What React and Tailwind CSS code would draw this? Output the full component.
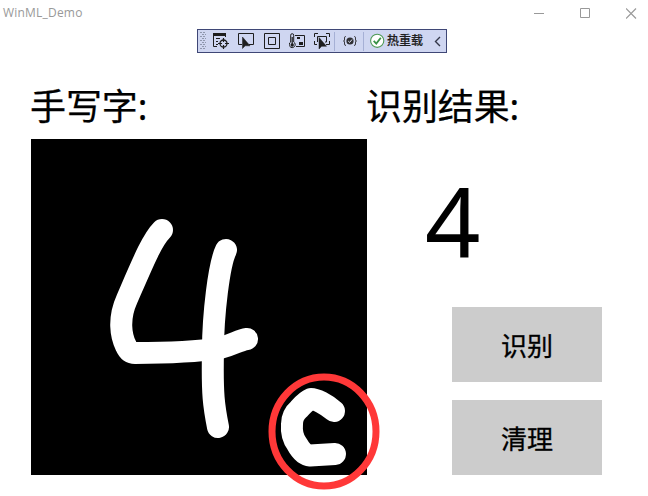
import React from "react";

const Icon = ({ className, children, w = 16 }) => (
  <svg width={w} height="16" viewBox={`0 0 ${w} 16`} className={`shrink-0 ${className}`} fill="none" stroke="#1e1e1e">
    {children}
  </svg>
);

const GRIP = [0, 1, 2, 3, 4, 5, 6, 7, 8];
const CURSOR = "M0 0V11.5L2.7 8.8H7.5Z";

function DebugToolbar() {
  return (
    <div className="ml-[197px] mt-[3px] flex h-6 w-[250px] shrink-0 items-center border border-[#3f4776] bg-[#cfd6f1]">
      <svg width="6" height="18" viewBox="0 0 6 18" className="ml-[2px] shrink-0" shapeRendering="crispEdges">
        {GRIP.map((i) => (
          <g key={i} fill="#8f97ad">
            <rect x={i % 2 ? 2 : 0} y={i * 2} width="1.5" height="1" />
            <rect x={i % 2 ? 5 : 3} y={i * 2} width="1.5" height="1" />
          </g>
        ))}
      </svg>
      <Icon className="ml-[7px]">
        <path d="M0 1.5H13" strokeWidth="3" />
        <path d="M.5 1V13.5H4M12.5 1V4M3 5.5H7M3 8.5H5M3 11.5H5" />
        <circle cx="10.5" cy="10.5" r="3.5" strokeWidth="1.3" />
        <path d="M10.5 5V9M10.5 12V16M5 10.5H9M12 10.5H16" strokeWidth="1.2" />
      </Icon>
      <Icon className="ml-[9px]">
        <path d="M4 11.5H.5V.5H15.5V11.5H11" />
        <path d={CURSOR} transform="translate(4.5 4)" fill="#1e1e1e" stroke="#1e1e1e" strokeWidth=".5" />
      </Icon>
      <Icon className="ml-[10px]">
        <path d="M.5 .5H15.5V15.5H.5ZM4.5 4.5H11.5V11.5H4.5Z" />
      </Icon>
      <Icon className="ml-[9px]">
        <path d="M6 2.5H15.5V13.5H7" />
        <path d="M1.7 9V2.2a1.5 1.5 0 0 1 3 0V9a3 3 0 1 1-3 0Z" />
        <path d="M3.2 4V12" strokeWidth="1.2" />
        <circle cx="3.2" cy="12" r="1.7" fill="#1e1e1e" stroke="none" />
        <path d="M8 4h3v2H8zM10 9h4v3h-4z" fill="#1e1e1e" stroke="none" />
      </Icon>
      <Icon className="ml-[9px]">
        <path d="M.5 4V.5H4M12 .5H15.5V4M15.5 8V11.5H12M3 11.5H.5V8M3.5 9V3.5H12.5V9H11" />
        <path d={CURSOR} transform="translate(5 4.5)" fill="#1e1e1e" stroke="#1e1e1e" strokeWidth=".5" />
      </Icon>
      <span className="ml-[4px] h-[19px] w-px shrink-0 bg-[#a6b0d5]" />
      <Icon className="ml-[8px]" w={14}>
        <path d="M3 3.5H2.5Q1.5 3.5 1.5 5V7Q1.5 8 .5 8Q1.5 8 1.5 9V11Q1.5 12.5 3 12.5M11 3.5H11.5Q12.5 3.5 12.5 5V7Q12.5 8 13.5 8Q12.5 8 12.5 9V11Q12.5 12.5 11 12.5" stroke="#3c3c42" />
        <circle cx="7" cy="8" r="3.6" fill="#303034" stroke="none" />
        <path d="M5.2 8L6.6 9.4L9 6.5" stroke="#e4e8f8" />
      </Icon>
      <span className="ml-[6px] h-[19px] w-px shrink-0 bg-[#a6b0d5]" />
      <Icon className="ml-[6px]" w={15}>
        <circle cx="7.2" cy="7.8" r="6.6" fill="#fff" stroke="#4f9a57" strokeWidth="1.1" />
        <path d="M3.7 7.8L6.3 10.6L10.8 4.8" stroke="#399247" strokeWidth="1.8" />
      </Icon>
      <span className="ml-[2px] whitespace-nowrap text-[12px] font-medium leading-none text-[#1e1e1e] [-webkit-text-stroke:0.2px]">热重载</span>
      <Icon className="ml-[11px]" w={7}>
        <path d="M6 4L1.5 8.5L6 13" strokeWidth="1.4" stroke="#34374a" />
      </Icon>
    </div>
  );
}

function InkCanvas() {
  return (
    <div className="relative h-[336px] w-[336px] shrink-0 bg-black">
      <svg className="absolute left-0 top-0 overflow-visible" width="336" height="336" viewBox="31 139 336 336" fill="none">
        <g stroke="#fff" strokeWidth="22" strokeLinecap="round" strokeLinejoin="round">
          <path d="M162 230C152 240 143 262 127 299C118 319 121 336 126 346Q129 353 135 353C160 353 195 352 220 348C233 345 239 340 247 339" />
          <path d="M226 250C219 264 213 315 213 350C212 395 214 407 218 427" />
          <path d="M334 411C326 404 316 399 311 399Q306 401 299 409Q292 415 292 424Q291 436 297 444Q303 455 310 455.500L335 454" />
        </g>
        <ellipse cx="324" cy="431.500" rx="52" ry="54.500" stroke="#ff3838" strokeWidth="7" />
      </svg>
    </div>
  );
}

const ActionButton = ({ children }) => (
  <button className="flex h-[75px] w-[150px] items-center justify-center bg-[#cccccc] pt-[3px] text-[26px] leading-none [-webkit-text-stroke:0.3px]">
    {children}
  </button>
);

const Heading = ({ children }) => (
  <h2 className="-ml-px flex h-[86px] shrink-0 items-end whitespace-nowrap pb-[14px] text-[36px] leading-none tracking-[-0.1px] [-webkit-text-stroke:0.25px]">
    {children}
  </h2>
);

export default function App() {
  return (
    <div className="flex h-[496px] w-[648px] flex-col overflow-hidden bg-white font-['Noto_Sans','Noto_Sans_CJK_SC',sans-serif] text-black">
      <header className="flex h-[26px] shrink-0 items-center justify-between pl-[3px] pr-[11px] text-[#999]">
        <span className="font-['Open_Sans','Noto_Sans',sans-serif] text-[12px] leading-none tracking-[0.2px]">WinML_Demo</span>
        <div className="flex items-center gap-[35px]">
          <svg width="11" height="11" viewBox="0 0 11 11" stroke="#999"><path d="M0 5.500H10" /></svg>
          <svg width="11" height="11" viewBox="0 0 11 11" stroke="#999" fill="none"><path d="M.5 .5H9.500V9.500H.5Z" /></svg>
          <svg width="11" height="11" viewBox="0 0 11 11" stroke="#999" strokeWidth="1.2"><path d="M0 .5L10 10.500M10 .5L0 10.500" /></svg>
        </div>
      </header>
      <DebugToolbar />
      <main className="flex flex-1 pl-[31px]">
        <section className="flex w-[336px] flex-col">
          <Heading>手写字:</Heading>
          <InkCanvas />
        </section>
        <section className="flex w-[250px] flex-col">
          <Heading>识别结果:</Heading>
          <div className="flex h-[168px] items-center pb-[5px] pl-[58px] text-[97px] leading-none">4</div>
          <div className="ml-[85px] flex flex-col gap-[18px]">
            <ActionButton>识别</ActionButton>
            <ActionButton>清理</ActionButton>
          </div>
        </section>
      </main>
    </div>
  );
}
